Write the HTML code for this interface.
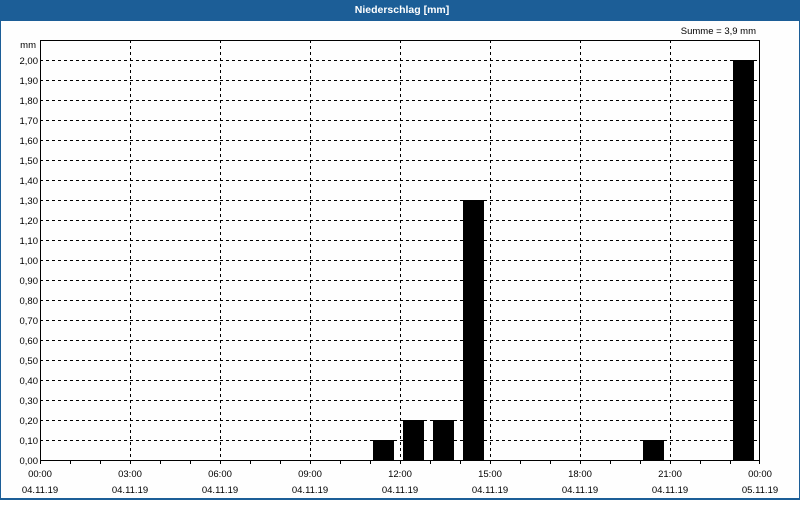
<!DOCTYPE html>
<html><head><style>
html,body{margin:0;padding:0}
body{width:800px;height:500px;overflow:hidden;background:#fff}
</style></head><body>
<svg width="800" height="500" xmlns="http://www.w3.org/2000/svg" font-family="Liberation Sans, sans-serif" font-size="9.5">
<rect x="0" y="0" width="800" height="500" fill="#1c5e97"/>
<rect x="1" y="21" width="798" height="477" fill="#fefefe"/>
<text x="402" y="13" fill="#fff" font-weight="bold" font-size="10.5" text-anchor="middle">Niederschlag [mm]</text>
<text x="756" y="34" text-anchor="end" fill="#000">Summe = 3,9 mm</text>
<text x="36" y="48" text-anchor="end">mm</text>
<g stroke="#000" stroke-width="1" stroke-dasharray="3,3" shape-rendering="crispEdges">
<path d="M40 60.5H760M40 80.5H760M40 100.5H760M40 120.5H760M40 140.5H760M40 160.5H760M40 180.5H760M40 200.5H760M40 220.5H760M40 240.5H760M40 260.5H760M40 280.5H760M40 300.5H760M40 320.5H760M40 340.5H760M40 360.5H760M40 380.5H760M40 400.5H760M40 420.5H760M40 440.5H760"/>
<path d="M130.5 40V460M220.5 40V460M310.5 40V460M400.5 40V460M490.5 40V460M580.5 40V460M670.5 40V460"/>
</g>
<g fill="#000">
<rect x="373" y="440" width="21" height="20"/>
<rect x="403" y="420" width="21" height="40"/>
<rect x="433" y="420" width="21" height="40"/>
<rect x="463" y="200" width="21" height="260"/>
<rect x="643" y="440" width="21" height="20"/>
<rect x="733" y="60" width="21" height="400"/>
</g>
<rect x="40.5" y="40.5" width="719" height="420" fill="none" stroke="#000" shape-rendering="crispEdges"/>
<g stroke="#000" shape-rendering="crispEdges">
<path d="M40.5 460v4M70.5 460v4M100.5 460v4M130.5 460v4M160.5 460v4M190.5 460v4M220.5 460v4M250.5 460v4M280.5 460v4M310.5 460v4M340.5 460v4M370.5 460v4M400.5 460v4M430.5 460v4M460.5 460v4M490.5 460v4M520.5 460v4M550.5 460v4M580.5 460v4M610.5 460v4M640.5 460v4M670.5 460v4M700.5 460v4M730.5 460v4M759.5 460v4"/>
</g>
<g text-anchor="end">
<text x="38" y="64">2,00</text><text x="38" y="84">1,90</text><text x="38" y="104">1,80</text><text x="38" y="124">1,70</text><text x="38" y="144">1,60</text><text x="38" y="164">1,50</text><text x="38" y="184">1,40</text><text x="38" y="204">1,30</text><text x="38" y="224">1,20</text><text x="38" y="244">1,10</text><text x="38" y="264">1,00</text><text x="38" y="284">0,90</text><text x="38" y="304">0,80</text><text x="38" y="324">0,70</text><text x="38" y="344">0,60</text><text x="38" y="364">0,50</text><text x="38" y="384">0,40</text><text x="38" y="404">0,30</text><text x="38" y="424">0,20</text><text x="38" y="444">0,10</text><text x="38" y="464">0,00</text>
</g>
<g text-anchor="middle">
<text x="40" y="477">00:00</text><text x="40" y="493">04.11.19</text>
<text x="130" y="477">03:00</text><text x="130" y="493">04.11.19</text>
<text x="220" y="477">06:00</text><text x="220" y="493">04.11.19</text>
<text x="310" y="477">09:00</text><text x="310" y="493">04.11.19</text>
<text x="400" y="477">12:00</text><text x="400" y="493">04.11.19</text>
<text x="490" y="477">15:00</text><text x="490" y="493">04.11.19</text>
<text x="580" y="477">18:00</text><text x="580" y="493">04.11.19</text>
<text x="670" y="477">21:00</text><text x="670" y="493">04.11.19</text>
<text x="760" y="477">00:00</text><text x="760" y="493">05.11.19</text>
</g>
</svg>
</body></html>
